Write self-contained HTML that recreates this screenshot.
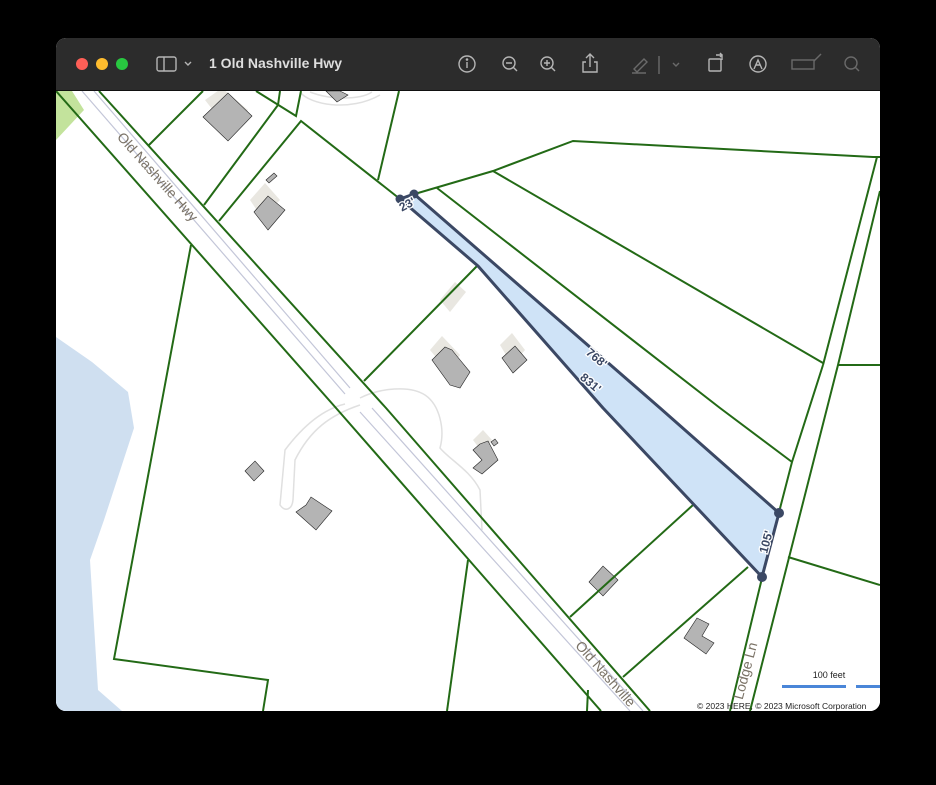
<!DOCTYPE html>
<html><head><meta charset="utf-8"><style>
html,body{margin:0;padding:0;background:#000;width:936px;height:785px;overflow:hidden}
#win{position:absolute;left:56px;top:38px;width:824px;height:673px;border-radius:10px;overflow:hidden;background:#fff}
#bar{position:absolute;left:0;top:0;width:824px;height:52px;background:#2c2c2c;border-bottom:1px solid #111}
.tl{position:absolute;top:20px;width:12px;height:12px;border-radius:50%}
#title{position:absolute;left:153px;top:17px;font:bold 14px "Liberation Sans",sans-serif;color:#dedede}
</style></head><body>
<div id="win">
<svg width="824" height="673" viewBox="56 38 824 673" style="position:absolute;left:0;top:0" font-family="Liberation Sans, sans-serif">
<rect x="56" y="90" width="824" height="621" fill="#fff"/>
<polygon points="56,91 72,91 84,110 56,140" fill="#c3e39c"/>
<polygon points="56,337 92,362 128,392 134,428 104,520 90,560 98,690 122,711 56,711" fill="#cfdff0"/>
<g fill="none" stroke="#e0e0e0" stroke-width="1.5">
<path d="M345,404 C320,410 300,430 285,450 L280,505 C285,512 292,510 293,500 L295,460 C310,430 330,415 360,405"/>
<path d="M360,398 C380,388 410,385 425,395 C440,405 445,430 440,448 C450,460 470,470 480,490 L482,530"/>
<path d="M300,92 C310,105 350,112 380,95"/>
<path d="M310,92 C330,100 360,100 372,92"/>
</g>
<g stroke="#c3c6d8" stroke-width="1.2">
<line x1="82" y1="91" x2="345" y2="394"/><line x1="360" y1="412" x2="630" y2="711"/>
<line x1="94" y1="91" x2="350" y2="388"/><line x1="372" y1="408" x2="643" y2="711"/>
</g>
<g fill="#e9e7e1">
<polygon points="205,100 222,88 248,110 230,132"/>
<polygon points="250,200 265,183 280,200 262,218"/>
<polygon points="440,300 455,282 466,292 450,312"/>
<polygon points="430,350 442,336 460,355 448,372"/>
<polygon points="500,345 512,333 525,350 512,365"/>
<polygon points="473,440 483,430 492,440 482,452"/>
</g>
<g fill="#b4b4b4" stroke="#222" stroke-width="0.6">
<polygon points="203,117 228,93 252,116 228,141"/>
<polygon points="254,212 268,196 285,210 268,230"/>
<polygon points="266,180 274,173 277,176 269,183"/>
<polygon points="326,91 340,91 348,95 337,102"/>
<polygon points="432,360 445,347 452,350 456,355 470,372 460,388 450,385"/>
<polygon points="502,358 515,346 527,360 513,373"/>
<polygon points="473,450 480,444 488,441 498,460 482,474 473,468 482,460"/>
<polygon points="491,442 495,439 498,443 494,446"/>
<polygon points="245,471 255,461 264,471 254,481"/>
<polygon points="296,512 306,505 311,497 332,511 316,530"/>
<polygon points="589,582 603,566 618,580 603,596"/>
<polygon points="684,638 697,618 709,624 702,636 714,643 706,654"/>
</g>
<g fill="none" stroke="#236a16" stroke-width="2">
<polyline points="56,91 336,408 469,560 601,711"/>
<polyline points="99,91 386,408 440,470 650,711"/>
<polyline points="149,145 203,91"/>
<polyline points="204,205 278,105 280,91"/>
<polyline points="256,91 296,116 301,91"/>
<polyline points="219,221 301,121 400,199"/>
<polyline points="378,180 399,91"/>
<polyline points="364,381 477,266"/>
<polyline points="191,245 164,390 114,659 268,680 263,711"/>
<polyline points="418,193 493,171 573,141 873,157 880,157"/>
<polyline points="437,188 720,408 792,462"/>
<polyline points="493,171 823,363"/>
<polyline points="877,157 823,365"/>
<polyline points="880,191 838,365 750,711"/>
<polyline points="838,365 880,365"/>
<polyline points="823,365 792,462 762,578 730,711"/>
<polyline points="788,557 880,585"/>
<polyline points="693,505 570,617"/>
<polyline points="748,567 623,677"/>
<polyline points="468,560 447,711"/>
<polyline points="588,690 587,711"/>
</g>
<polygon points="400,199 414,194 660,408 779,513 762,577 603,408 478,266" fill="#cfe3f7" stroke="#3b4864" stroke-width="3" stroke-linejoin="round"/>
<g fill="#3b4864"><circle cx="400" cy="199" r="4.5"/><circle cx="414" cy="194" r="4.5"/><circle cx="779" cy="513" r="5"/><circle cx="762" cy="577" r="5"/></g>
<g font-size="12" font-weight="bold" fill="#3b4864" stroke="#fff" stroke-width="2.5" paint-order="stroke">
<text transform="translate(409,208) rotate(-28)" text-anchor="middle">23'</text>
<text transform="translate(594,361) rotate(40)" text-anchor="middle">768'</text>
<text transform="translate(588,386) rotate(40)" text-anchor="middle">831'</text>
<text transform="translate(770,543) rotate(-75)" text-anchor="middle">105'</text>
</g>
<g font-size="14" fill="#7a7266">
<text transform="translate(154,180) rotate(48.5)" text-anchor="middle">Old Nashville Hwy</text>
<text transform="translate(602,677) rotate(48.5)" text-anchor="middle">Old Nashville</text>
<text transform="translate(750,672) rotate(-75)" text-anchor="middle">Lodge Ln</text>
</g>
<text x="829" y="678" font-size="9" fill="#222" text-anchor="middle">100 feet</text>
<rect x="782" y="685" width="64" height="3" fill="#4a86d8"/>
<rect x="856" y="685" width="24" height="3" fill="#4a86d8"/>
<text x="697" y="709" font-size="8.5" fill="#222">© 2023 HERE, © 2023 Microsoft Corporation</text>
</svg>
<div id="bar">
<div class="tl" style="left:20px;background:#fe5f57"></div>
<div class="tl" style="left:40px;background:#febc2e"></div>
<div class="tl" style="left:60px;background:#28c840"></div>
<svg width="824" height="52" style="position:absolute;left:0;top:0" fill="none" stroke="#b5b5b5" stroke-width="1.4">
<rect x="101" y="19" width="19" height="14" rx="2"/><line x1="108" y1="19" x2="108" y2="33"/>
<polyline points="129,24 132,27 135,24"/>
<circle cx="411" cy="26" r="8"/><line x1="411" y1="24" x2="411" y2="30"/><circle cx="411" cy="21.5" r="0.6" fill="#b5b5b5"/>
<circle cx="453" cy="25" r="6"/><line x1="457" y1="29" x2="461" y2="33"/><line x1="450" y1="25" x2="456" y2="25"/>
<circle cx="491" cy="25" r="6"/><line x1="495" y1="29" x2="499" y2="33"/><line x1="488" y1="25" x2="494" y2="25"/><line x1="491" y1="22" x2="491" y2="28"/>
<path d="M530,24 h-3 v10 h14 v-10 h-3 M534,29 v-12 M530,20 l4,-4 l4,4"/>
<g stroke="#6a6a6a"><path d="M578,31 l10,-10 l3,3 l-10,10 z M576,35 h14"/><line x1="603" y1="18" x2="603" y2="36"/><polyline points="617,25 620,28 623,25"/>
<rect x="736" y="22" width="22" height="9"/><path d="M758,23 l7,-7"/><circle cx="795" cy="25" r="6"/><line x1="799" y1="29" x2="803" y2="33"/></g>
<rect x="653" y="21" width="12" height="12" rx="1"/><path d="M660,17 h6 v5 M664,15 l2,2 l-2,2"/>
<circle cx="702" cy="26" r="8"/><path d="M698,31 l4,-9 l4,9 M700,27 h4"/>
</svg>
<div id="title">1 Old Nashville Hwy</div>
</div>
</div>
</body></html>
